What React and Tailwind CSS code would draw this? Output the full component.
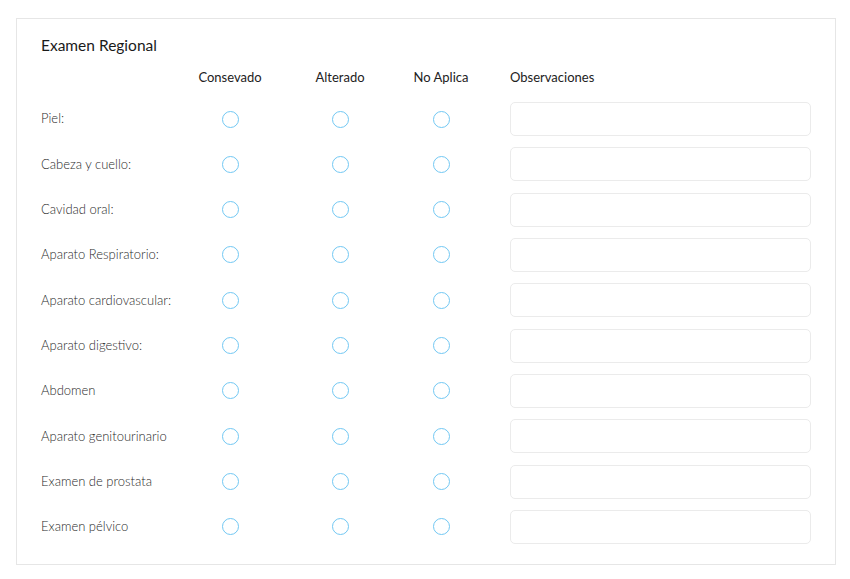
import React from 'react'

const rows = [
  'Piel:',
  'Cabeza y cuello:',
  'Cavidad oral:',
  'Aparato Respiratorio:',
  'Aparato cardiovascular:',
  'Aparato digestivo:',
  'Abdomen',
  'Aparato genitourinario',
  'Examen de prostata',
  'Examen pélvico',
]

const Radio = ({ name }) => (
  <label className='flex justify-center items-center'>
    <input type='radio' name={name} className='appearance-none w-[17px] h-[17px] rounded-full border border-[#72c8f3] bg-white' />
  </label>
)

const App = () => {
  return (
    <div className='min-h-screen bg-white pt-[18px] pl-4 font-["Lato","Liberation_Sans",sans-serif]'>
      <div className='w-[820px] border border-[#e6e6e6] bg-white px-6 pt-4 pb-5'>
        <h2 className='text-[15.5px] leading-5 text-[#1a1a1a] mb-[13px]'>Examen Regional</h2>
        <div className='grid grid-cols-[134px_110px_110px_92px_1fr] items-center text-[13px] text-[#222] h-5 mb-[14px]'>
          <div></div>
          <div className='text-center'>Consevado</div>
          <div className='text-center'>Alterado</div>
          <div className='text-center'>No Aplica</div>
          <div className='pl-[23px]'>Observaciones</div>
        </div>
        <div className='grid grid-cols-[134px_110px_110px_92px_1fr] gap-y-[11.33px] items-center'>
          {rows.map((row, i) => (
            <React.Fragment key={i}>
              <div className='text-[13px] text-[#2a2a2a] font-light'>{row}</div>
              <Radio name={'r' + i} />
              <Radio name={'r' + i} />
              <Radio name={'r' + i} />
              <div className='pl-[23px]'>
                <input type='text' className='w-full h-[34px] rounded-[5px] border border-[#ebebeb] bg-white px-2 text-[13px] outline-none' />
              </div>
            </React.Fragment>
          ))}
        </div>
      </div>
    </div>
  )
}

export default App
